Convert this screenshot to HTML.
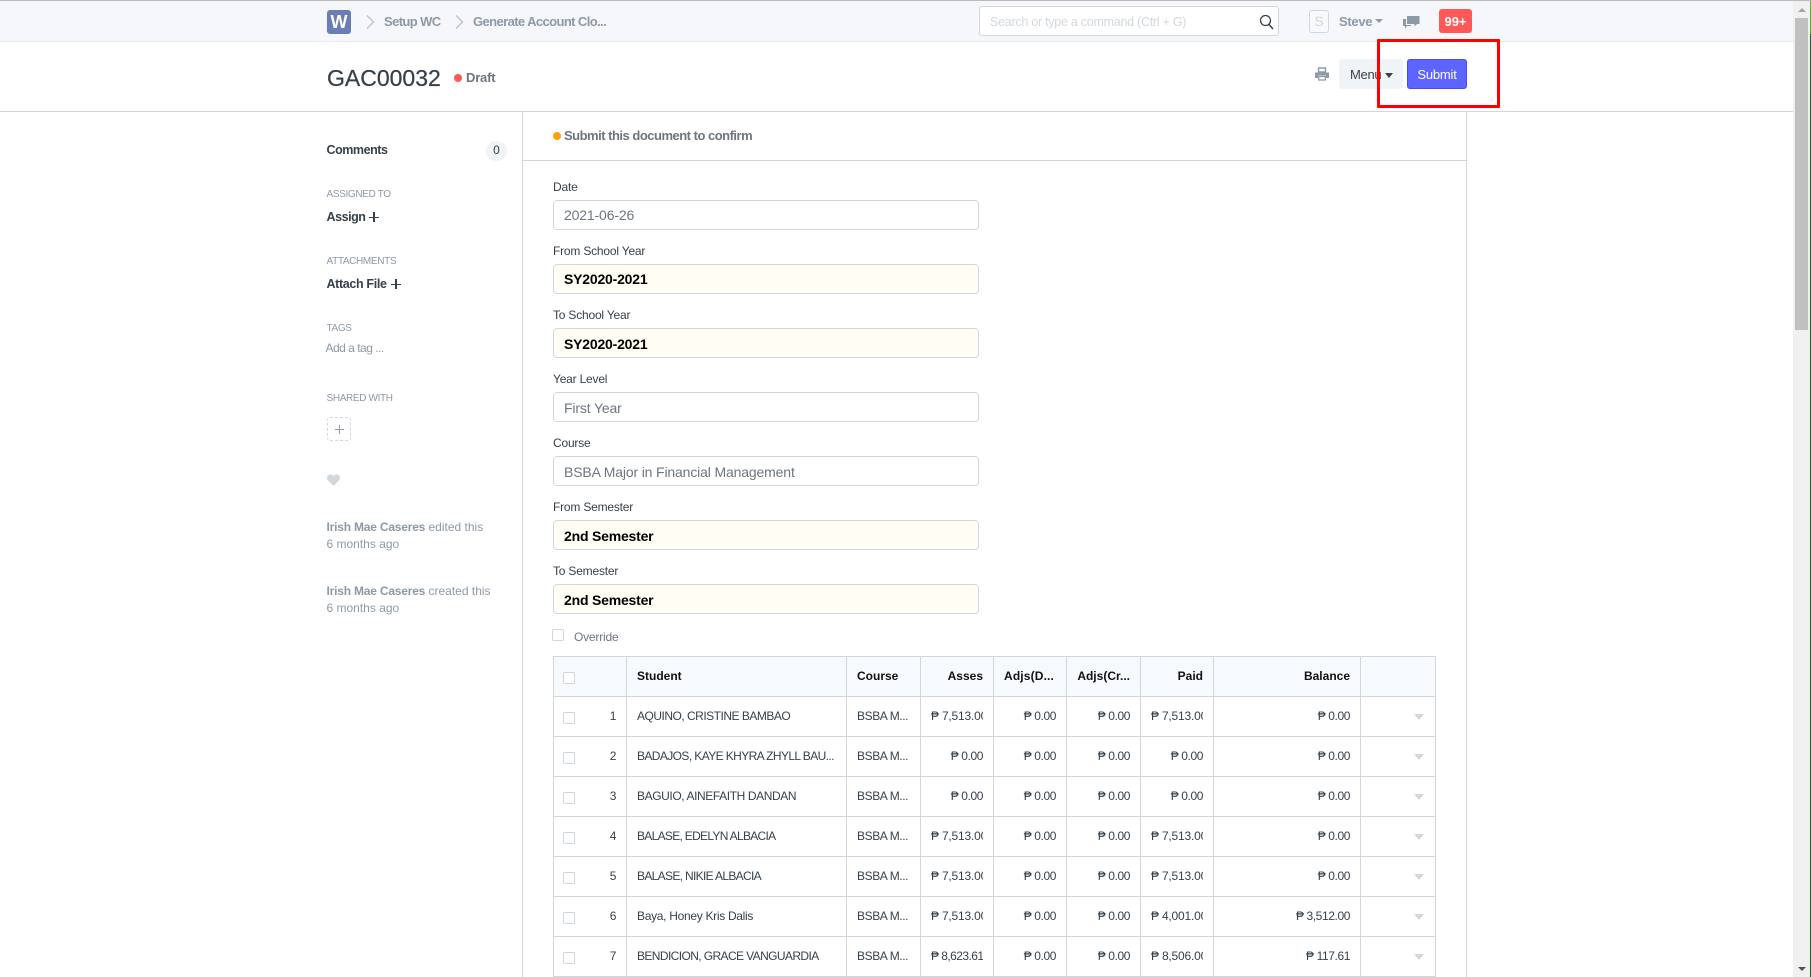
<!DOCTYPE html>
<html lang="en"><head><meta charset="utf-8"><title>GAC00032</title>
<style>
*{box-sizing:border-box}
html,body{margin:0;padding:0;width:1811px;height:977px;overflow:hidden;background:#fff;font-family:"Liberation Sans",sans-serif;color:#36414c;font-size:13px}
.a{position:absolute}
.t{position:absolute;white-space:nowrap;line-height:20px}
.b{font-weight:bold}
.g{color:#8d99a6}
.h{font-size:10px;color:#8d99a6;letter-spacing:-.35px}
.bd{font-weight:bold;color:#36414c;font-size:12.500px;letter-spacing:-.45px}
.s b{letter-spacing:-.2px}
.l{position:absolute;left:553px;font-size:12px;line-height:20px;color:#36414c;white-space:nowrap;letter-spacing:-.2px}
.i{position:absolute;left:553px;width:426px;height:30px;border:1px solid #d1d8dd;border-radius:4px;background:#fff;padding-left:10px;line-height:29px;font-size:14px;color:#6c7680;white-space:nowrap;letter-spacing:-.15px}
.y{background:#fffdf4;color:#000;font-weight:bold;font-size:14px;letter-spacing:-.2px}
.p{padding-top:1px}
.cb{position:absolute;width:12px;height:12px;border:1px solid #d1d8dd;border-radius:2px;background:#fff}
table{position:absolute;left:553px;top:656px;width:882px;border-collapse:collapse;table-layout:fixed;font-size:12px;color:#36414c}
td,th{border:1px solid #d1d8dd;height:40px;padding:0 10px 2px;white-space:nowrap;position:relative;font-weight:normal;overflow:hidden;text-align:left;letter-spacing:-.4px}
th{background:#f7fafc;font-weight:bold;color:#111;letter-spacing:0}
.r{text-align:right}
.c{overflow:hidden;line-height:20px;letter-spacing:-.2px}
td .cb,th .cb{left:9px;top:15px}
.n{position:absolute;right:10px;top:9px;line-height:20px}
.d{position:absolute;left:53px;top:17px;width:0;height:0;border-left:5.500px solid transparent;border-right:5.500px solid transparent;border-top:6px solid #d1d8dd}
</style></head>
<body>
<!-- navbar -->
<div class="a" style="left:0;top:0;width:1793px;height:42px;background:#f5f7fa;border-bottom:1px solid #e8ebee"></div>
<div class="a" style="left:0;top:0;width:1811px;height:1px;background:#bbb"></div>
<div class="a b" style="left:327px;top:10px;width:24px;height:24px;border-radius:3px;background:#6a7db8;color:#fff;text-align:center;font-size:18px;line-height:24px">W</div>
<svg class="a" style="left:364px;top:14px" width="12" height="16" viewBox="0 0 12 16"><path d="M3 1.5L9.500 8L3 14.500" fill="none" stroke="#c0c6cc" stroke-width="1.500"/></svg>
<div class="t b g" style="left:384px;top:12px;font-size:13px;letter-spacing:-.6px">Setup WC</div>
<svg class="a" style="left:453px;top:14px" width="12" height="16" viewBox="0 0 12 16"><path d="M3 1.5L9.500 8L3 14.500" fill="none" stroke="#c0c6cc" stroke-width="1.500"/></svg>
<div class="t b g" style="left:473px;top:12px;font-size:13px;letter-spacing:-.6px">Generate Account Clo...</div>
<div class="a" style="left:979px;top:6px;width:300px;height:30px;background:#fff;border:1px solid #d1d8dd;border-radius:3px"></div>
<div class="t" style="left:990px;top:12px;font-size:12.500px;color:#d1d8dd;letter-spacing:-.26px">Search or type a command (Ctrl + G)</div>
<svg class="a" style="left:1259px;top:14px" width="15" height="16" viewBox="0 0 15 16"><circle cx="6.500" cy="6.500" r="5" fill="none" stroke="#36414c" stroke-width="1.300"/><path d="M10 10.500L14 15" stroke="#36414c" stroke-width="1.500"/></svg>
<div class="a" style="left:1309px;top:10px;width:20px;height:23px;border:1px solid #d1d8dd;border-radius:3px;background:#f8f9fb;color:#d1d8dd;text-align:center;line-height:21px;font-size:14px">S</div>
<div class="t b g" style="left:1339px;top:12px;font-size:13px;letter-spacing:-.3px">Steve</div>
<div class="a" style="left:1375px;top:19px;width:0;height:0;border-left:4px solid transparent;border-right:4px solid transparent;border-top:4px solid #8d99a6"></div>
<svg class="a" style="left:1403px;top:15px" width="17" height="15" viewBox="0 0 17 15"><path d="M4 1H16.500V9H14L11.500 11.500V9H4Z" fill="#8d99a6"/><path d="M0 4H3V10H8V11H4L2 14V11H0Z" fill="#8d99a6"/></svg>
<div class="a b" style="left:1439px;top:9px;width:33px;height:24px;border-radius:3px;background:#ff5858;color:#fff;text-align:center;line-height:25px;font-size:13px">99+</div>
<!-- page head -->
<div class="a" style="left:0;top:111px;width:1793px;height:1px;background:#d1d8dd"></div>
<div class="t" style="left:327px;top:68px;font-size:23px;color:#36414c;-webkit-text-stroke:.25px #36414c">GAC00032</div>
<div class="a" style="left:454px;top:74px;width:8px;height:8px;border-radius:50%;background:#ff5858"></div>
<div class="t b" style="left:466px;top:68px;font-size:13px;color:#6c7680;letter-spacing:-.2px">Draft</div>
<svg class="a" style="left:1315px;top:67px" width="14" height="14" viewBox="0 0 14 14"><path d="M3.500 1H10.500V5H3.500Z" fill="none" stroke="#8d99a6" stroke-width="1.400"/><path d="M0 5.500H14V11H11V8.500H3V11H0Z" fill="#8d99a6"/><path d="M3.700 9.500H10.300V13H3.700Z" fill="none" stroke="#8d99a6" stroke-width="1.200"/></svg>
<div class="a" style="left:1339px;top:59px;width:64px;height:30px;background:#f0f4f7;border-radius:3px"></div>
<div class="t" style="left:1350px;top:65px;font-size:13px;color:#36414c;letter-spacing:-.3px">Menu</div>
<div class="a" style="left:1385px;top:73px;width:0;height:0;border-left:4px solid transparent;border-right:4px solid transparent;border-top:5px solid #36414c"></div>
<div class="a" style="left:1407px;top:59px;width:60px;height:30px;background:#5e64ff;border:1px solid #444bff;border-radius:3px;color:#fff;text-align:center;line-height:30px;font-size:13px;letter-spacing:-.2px">Submit</div>
<div class="a" style="left:1377px;top:39px;width:123px;height:69px;border:3px solid #f00;border-radius:1px"></div>
<!-- sidebar -->
<div class="a" style="left:522px;top:111px;width:1px;height:866px;background:#d1d8dd"></div>
<div class="t bd" style="left:326.500px;top:140px">Comments</div>
<div class="a" style="left:486px;top:141px;width:21px;height:20px;border-radius:10px;background:#f0f4f7;text-align:center;line-height:19px;font-size:12px;color:#36414c">0</div>
<div class="t h" style="left:326.500px;top:185px">ASSIGNED TO</div>
<div class="t bd" style="left:326.500px;top:207px">Assign</div>
<div class="a" style="left:369px;top:216.500px;width:10px;height:1.500px;background:#36414c"></div><div class="a" style="left:373px;top:212px;width:1.500px;height:10px;background:#36414c"></div>
<div class="t h" style="left:326.500px;top:252px">ATTACHMENTS</div>
<div class="t bd" style="left:326.500px;top:274px;letter-spacing:-.35px">Attach File</div>
<div class="a" style="left:391px;top:283.500px;width:10px;height:1.500px;background:#36414c"></div><div class="a" style="left:395px;top:279px;width:1.500px;height:10px;background:#36414c"></div>
<div class="t h" style="left:326.500px;top:319px">TAGS</div>
<div class="t g" style="left:325.500px;top:338px;font-size:12px;letter-spacing:-.5px">Add a tag ...</div>
<div class="t h" style="left:326.500px;top:389px">SHARED WITH</div>
<div class="a" style="left:327px;top:417px;width:24px;height:24px;border:1px dashed #d1d8dd;border-radius:3px"></div>
<div class="a" style="left:334.500px;top:428.500px;width:9px;height:1.500px;background:#8d99a6"></div><div class="a" style="left:338.500px;top:424.500px;width:1.500px;height:9px;background:#8d99a6"></div>
<svg class="a" style="left:326.500px;top:473.500px" width="13" height="12" viewBox="0 0 13 12"><path d="M6.500 12L1 6.500C-.8 4.500 0 1 3 .5C4.500 .2 5.800 1 6.500 2C7.200 1 8.500 .2 10 .5C13 1 13.800 4.500 12 6.500Z" fill="#d1d8dd"/></svg>
<div class="t g s" style="left:326.500px;top:517px;font-size:12px"><b>Irish Mae Caseres</b> edited this</div>
<div class="t g" style="left:326.500px;top:534px;font-size:12px">6 months ago</div>
<div class="t g s" style="left:326.500px;top:581px;font-size:12px"><b>Irish Mae Caseres</b> created this</div>
<div class="t g" style="left:326.500px;top:598px;font-size:12px">6 months ago</div>
<!-- form -->
<div class="a" style="left:1466px;top:111px;width:1px;height:866px;background:#d1d8dd"></div>
<div class="a" style="left:522px;top:160px;width:944px;height:1px;background:#d1d8dd"></div>
<div class="a" style="left:553px;top:132px;width:8px;height:8px;border-radius:50%;background:#ffa00a"></div>
<div class="t b" style="left:564px;top:126px;font-size:13px;color:#6c7680;letter-spacing:-.5px">Submit this document to confirm</div>
<div class="l" style="top:177px">Date</div>
<div class="i" style="top:200px">2021-06-26</div>
<div class="l" style="top:241px">From School Year</div>
<div class="i y" style="top:264px">SY2020-2021</div>
<div class="l" style="top:305px">To School Year</div>
<div class="i y p" style="top:328px">SY2020-2021</div>
<div class="l" style="top:369px">Year Level</div>
<div class="i p" style="top:392px">First Year</div>
<div class="l" style="top:433px">Course</div>
<div class="i p" style="top:456px">BSBA Major in Financial Management</div>
<div class="l" style="top:497px">From Semester</div>
<div class="i y p" style="top:520px">2nd Semester</div>
<div class="l" style="top:561px">To Semester</div>
<div class="i y p" style="top:584px">2nd Semester</div>
<div class="cb" style="left:552px;top:629px"></div>
<div class="l" style="left:574px;top:627px;color:#6c7680">Override</div>
<table>
<colgroup><col style="width:73px"><col style="width:220px"><col style="width:74px"><col style="width:73px"><col style="width:73px"><col style="width:74px"><col style="width:73px"><col style="width:147px"><col style="width:75px"></colgroup>
<tr><th><span class="cb"></span></th><th>Student</th><th>Course</th><th class="r">Asses</th><th class="r" style="padding-right:12px;letter-spacing:.15px">Adjs(D...</th><th class="r">Adjs(Cr...</th><th class="r">Paid</th><th class="r">Balance</th><th></th></tr>
<tr><td><span class="cb"></span><span class="n">1</span></td><td style="letter-spacing:-.5px">AQUINO, CRISTINE BAMBAO</td><td>BSBA M...</td><td><div class="c">₱ 7,513.00</div></td><td class="r">₱ 0.00</td><td class="r">₱ 0.00</td><td><div class="c">₱ 7,513.00</div></td><td class="r">₱ 0.00</td><td><span class="d"></span></td></tr>
<tr><td><span class="cb"></span><span class="n">2</span></td><td><div class="c" style="letter-spacing:-.6px">BADAJOS, KAYE KHYRA ZHYLL BAU...</div></td><td>BSBA M...</td><td class="r">₱ 0.00</td><td class="r">₱ 0.00</td><td class="r">₱ 0.00</td><td class="r">₱ 0.00</td><td class="r">₱ 0.00</td><td><span class="d"></span></td></tr>
<tr><td><span class="cb"></span><span class="n">3</span></td><td>BAGUIO, AINEFAITH DANDAN</td><td>BSBA M...</td><td class="r">₱ 0.00</td><td class="r">₱ 0.00</td><td class="r">₱ 0.00</td><td class="r">₱ 0.00</td><td class="r">₱ 0.00</td><td><span class="d"></span></td></tr>
<tr><td><span class="cb"></span><span class="n">4</span></td><td style="letter-spacing:-.7px">BALASE, EDELYN ALBACIA</td><td>BSBA M...</td><td><div class="c">₱ 7,513.00</div></td><td class="r">₱ 0.00</td><td class="r">₱ 0.00</td><td><div class="c">₱ 7,513.00</div></td><td class="r">₱ 0.00</td><td><span class="d"></span></td></tr>
<tr><td><span class="cb"></span><span class="n">5</span></td><td style="letter-spacing:-.67px">BALASE, NIKIE ALBACIA</td><td>BSBA M...</td><td><div class="c">₱ 7,513.00</div></td><td class="r">₱ 0.00</td><td class="r">₱ 0.00</td><td><div class="c">₱ 7,513.00</div></td><td class="r">₱ 0.00</td><td><span class="d"></span></td></tr>
<tr><td><span class="cb"></span><span class="n">6</span></td><td style="letter-spacing:-.3px">Baya, Honey Kris Dalis</td><td>BSBA M...</td><td><div class="c">₱ 7,513.00</div></td><td class="r">₱ 0.00</td><td class="r">₱ 0.00</td><td><div class="c">₱ 4,001.00</div></td><td class="r">₱ 3,512.00</td><td><span class="d"></span></td></tr>
<tr><td><span class="cb"></span><span class="n">7</span></td><td style="letter-spacing:-.6px">BENDICION, GRACE VANGUARDIA</td><td>BSBA M...</td><td><div class="c" style="letter-spacing:-.55px">₱ 8,623.61</div></td><td class="r">₱ 0.00</td><td class="r">₱ 0.00</td><td><div class="c">₱ 8,506.00</div></td><td class="r">₱ 117.61</td><td><span class="d"></span></td></tr>
</table>
<!-- scrollbar -->
<div class="a" style="left:1793px;top:1px;width:17px;height:976px;background:#f0f0f0"></div>
<div class="a" style="left:1795px;top:18px;width:13px;height:312px;background:#c0c0c0"></div>
<div class="a" style="left:1798px;top:8px;width:0;height:0;border-left:4px solid transparent;border-right:4px solid transparent;border-bottom:4px solid #a3a3a3"></div>
<div class="a" style="left:1798px;top:967px;width:0;height:0;border-left:4px solid transparent;border-right:4px solid transparent;border-top:4px solid #505050"></div>
<div class="a" style="left:1810px;top:1px;width:1px;height:33px;background:#5cae32"></div>
<div class="a" style="left:1810px;top:34px;width:1px;height:943px;background:#2a5a2a"></div>
</body></html>
